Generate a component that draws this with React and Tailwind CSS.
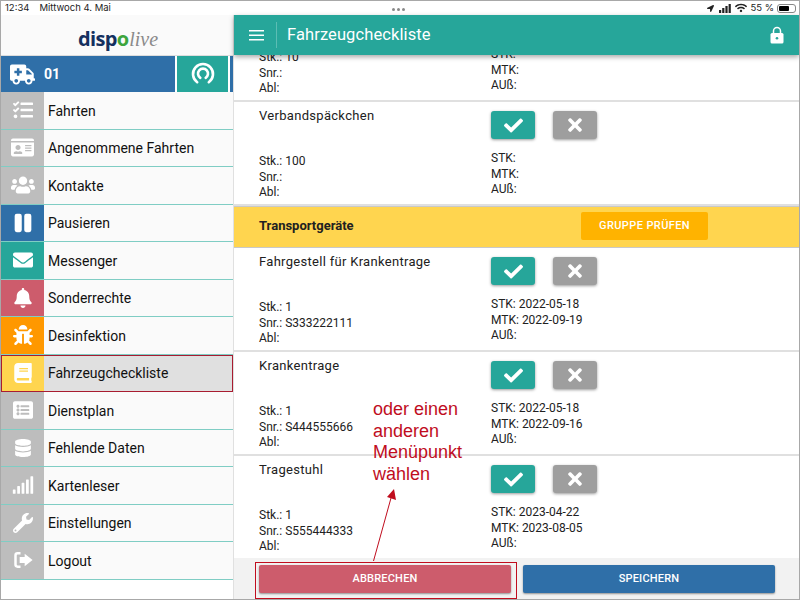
import { FaAmbulance, FaTasks, FaIdCard, FaUsers, FaEnvelope, FaBell, FaBug, FaBook, FaListAlt, FaDatabase, FaSignal, FaWrench, FaCheck, FaTimes, FaLocationArrow, FaWifi } from "react-icons/fa";

function PauseIcon({ className }) {
  return (
    <svg viewBox="0 0 24 24" className={className} fill="white">
      <rect x="2" y="1" width="8.5" height="22" rx="2.5" />
      <rect x="13.5" y="1" width="8.5" height="22" rx="2.5" />
    </svg>
  );
}

function LogoutIcon({ className }) {
  return (
    <svg viewBox="0 0 24 24" className={className} fill="none">
      <path d="M9 4H5.5A2.5 2.5 0 0 0 3 6.5v11A2.5 2.5 0 0 0 5.5 20H9" stroke="white" strokeWidth="3" />
      <path d="M14 4.5 23.5 12 14 19.5V15.5H8v-7h6z" fill="white" />
    </svg>
  );
}

function BroadcastIcon() {
  return (
    <svg width="24" height="24" viewBox="0 0 24 24" fill="none" stroke="white" strokeLinecap="round">
      <path d="M6.2 20.2a10 10 0 1 1 11.6 0" strokeWidth="2.6" />
      <path d="M9.3 15.8a5 5 0 1 1 5.4 0" strokeWidth="2.6" />
    </svg>
  );
}

function LockIcon() {
  return (
    <svg width="14" height="18" viewBox="0 0 14 18" className="ml-auto mr-[15px]">
      <path d="M3.5 8V5a3.5 3.5 0 0 1 7 0v3" fill="none" stroke="white" strokeWidth="1.5" />
      <rect x="0.5" y="7" width="13" height="10.5" rx="1.5" fill="white" />
      <circle cx="7" cy="12.2" r="1.3" fill="#26a69a" />
    </svg>
  );
}

function SignalBars() {
  return (
    <svg width="12" height="9" viewBox="0 0 12 9" fill="#222" className="ml-[3px]">
      <rect x="0" y="6" width="2.2" height="3" />
      <rect x="3.2" y="4" width="2.2" height="5" />
      <rect x="6.4" y="2" width="2.2" height="7" />
      <rect x="9.6" y="0" width="2.2" height="9" />
    </svg>
  );
}

const menu = [
  { label: "Fahrten", Icon: FaTasks, bg: "bg-[#bdbdbd]", size: "w-5 h-5" },
  { label: "Angenommene Fahrten", Icon: FaIdCard, bg: "bg-[#bdbdbd]", size: "w-[23px] h-[23px]" },
  { label: "Kontakte", Icon: FaUsers, bg: "bg-[#bdbdbd]", size: "w-6 h-6" },
  { label: "Pausieren", Icon: PauseIcon, bg: "bg-[#2f6fa8]", size: "w-[20px] h-[20px]" },
  { label: "Messenger", Icon: FaEnvelope, bg: "bg-[#26a69a]", size: "w-[20px] h-[20px]" },
  { label: "Sonderrechte", Icon: FaBell, bg: "bg-[#cd5c6c]", size: "w-5 h-5" },
  { label: "Desinfektion", Icon: FaBug, bg: "bg-[#ff9800]", size: "w-5 h-5" },
  { label: "Fahrzeugcheckliste", Icon: FaBook, bg: "bg-[#ffd54f]", size: "w-5 h-5", active: true },
  { label: "Dienstplan", Icon: FaListAlt, bg: "bg-[#bdbdbd]", size: "w-5 h-5" },
  { label: "Fehlende Daten", Icon: FaDatabase, bg: "bg-[#bdbdbd]", size: "w-[18px] h-[18px]" },
  { label: "Kartenleser", Icon: FaSignal, bg: "bg-[#bdbdbd]", size: "w-[22px] h-[22px]" },
  { label: "Einstellungen", Icon: FaWrench, bg: "bg-[#bdbdbd]", size: "w-5 h-5" },
  { label: "Logout", Icon: LogoutIcon, bg: "bg-[#bdbdbd]", size: "w-5 h-5" },
];

const items = [
  { title: "Verbandspäckchen", stk: "100", snr: "", stkDate: "", mtk: "" },
  { group: "Transportgeräte" },
  { title: "Fahrgestell für Krankentrage", stk: "1", snr: "S333222111", stkDate: "2022-05-18", mtk: "2022-09-19" },
  { title: "Krankentrage", stk: "1", snr: "S444555666", stkDate: "2022-05-18", mtk: "2022-09-16" },
  { title: "Tragestuhl", stk: "1", snr: "S555444333", stkDate: "2023-04-22", mtk: "2023-08-05" },
];

function Details({ left, right }) {
  return (
    <div className="flex leading-[15.6px]">
      <div className="w-[232px] shrink-0">
        {left.map((t) => <div key={t}>{t}</div>)}
      </div>
      <div className="-mt-[3px]">
        {right.map((t) => <div key={t}>{t}</div>)}
      </div>
    </div>
  );
}

function Card({ item }) {
  return (
    <div className="h-[104px] shrink-0 bg-white border-b-2 border-[#e0e0e0] pl-[25px] flex flex-col">
      <div className="flex h-[48px]">
        <div className="w-[232px] shrink-0 pt-[4px] text-[13px] tracking-[0.3px]">{item.title}</div>
        <div className="flex gap-[18px] pt-[9px]">
          <div className="w-[44px] h-[28px] rounded-[3px] bg-[#26a69a] shadow-[0_1px_3px_rgba(0,0,0,0.4)] flex items-center justify-center">
            <FaCheck className="w-[19px] h-[19px] text-white" />
          </div>
          <div className="w-[44px] h-[28px] rounded-[3px] bg-[#9e9e9e] shadow-[0_1px_3px_rgba(0,0,0,0.4)] flex items-center justify-center">
            <FaTimes className="w-[20px] h-[20px] text-white" />
          </div>
        </div>
      </div>
      <div className="mt-[4px]">
        <Details
          left={[`Stk.: ${item.stk}`, `Snr.: ${item.snr}`, "Abl:"]}
          right={[`STK: ${item.stkDate}`, `MTK: ${item.mtk}`, "AUß:"]}
        />
      </div>
    </div>
  );
}

export default function App() {
  return (
    <div className="relative w-[800px] h-[600px] border border-[#a8a8a8] bg-white overflow-hidden text-[#212121] text-[12px] font-['Roboto',sans-serif] flex flex-col">
      {/* ipad status bar */}
      <div className="h-[14px] shrink-0 flex items-center justify-between pl-[4px] pr-[3px] text-[9.5px] font-['Inter',sans-serif] text-[#222] bg-white">
        <div className="flex gap-[10px]">
          <span>12:34</span>
          <span>Mittwoch 4. Mai</span>
        </div>
        <div className="flex items-center gap-[2px]">
          <FaLocationArrow className="w-[7px] h-[7px]" />
          <SignalBars />
          <FaWifi className="w-[12px] h-[10px] ml-[2px]" />
          <span className="ml-[1px]">55 %</span>
          <div className="w-[19px] h-[9px] border border-[#888] rounded-[3px] p-[1px] ml-[1px]">
            <div className="w-[10px] h-full bg-black rounded-[1px]" />
          </div>
        </div>
      </div>
      <div className="absolute left-[391px] top-[7px] flex gap-[2px]">
        <span className="w-[3px] h-[3px] rounded-full bg-[#888]" />
        <span className="w-[3px] h-[3px] rounded-full bg-[#888]" />
        <span className="w-[3px] h-[3px] rounded-full bg-[#888]" />
      </div>

      <div className="flex flex-1 min-h-0">
        {/* sidebar */}
        <div className="w-[232px] shrink-0 flex flex-col bg-white">
          <div className="h-[40px] shrink-0 bg-[#fafafa] flex items-center justify-center pl-[2px] pt-[8px] leading-none">
            <span className="font-['Open_Sans',sans-serif] font-bold text-[#14305f] text-[20px] tracking-[-0.6px]">disp</span>
            <span className="font-['Open_Sans',sans-serif] font-bold text-[#3da53d] text-[20px]">o</span>
            <span className="font-['Liberation_Serif',serif] italic text-[#8a8a8a] text-[20px]">live</span>
          </div>
          <div className="h-[37px] shrink-0 flex gap-[2px] border-t border-[#ddd]">
            <div className="w-[174px] bg-[#2f6fa8] flex items-center text-white">
              <FaAmbulance className="w-[25px] h-[25px] ml-[9px]" />
              <span className="ml-[9px] text-[14px] font-bold">01</span>
            </div>
            <div className="w-[51px] bg-[#26a69a] flex items-center justify-center">
              <BroadcastIcon />
            </div>
            <div className="flex-1 bg-[#2f6fa8]" />
          </div>
          <div className="flex flex-col">
            {menu.map(({ label, Icon, bg, size, active }) => (
              <div
                key={label}
                className={`h-[37.5px] shrink-0 flex box-border border-b border-[#7fcdc4] ${active ? "bg-[#e0e0e0] outline outline-1 -outline-offset-1 outline-[#a81c30]" : "bg-[#fafafa]"}`}
              >
                <div className={`w-[43px] shrink-0 flex items-center justify-center ${bg}`}>
                  <Icon className={`${size} text-white`} />
                </div>
                <span className="pl-[4px] pt-[2px] self-center text-[14px] text-[#111]">{label}</span>
              </div>
            ))}
          </div>
        </div>

        {/* main */}
        <div className="flex-1 min-w-0 flex flex-col bg-white border-l border-[#e0e0e0]">
          <div className="h-[40px] shrink-0 bg-[#26a69a] relative z-10 shadow-[0_2px_5px_rgba(0,0,0,0.35)] flex items-center text-white">
            <svg width="15" height="11" viewBox="0 0 15 11" className="ml-[15px]" fill="white">
              <rect y="0" width="15" height="1.5" />
              <rect y="4.5" width="15" height="1.5" />
              <rect y="9" width="15" height="1.5" />
            </svg>
            <div className="w-px h-[26px] bg-[#5cbdb4] ml-[12px]" />
            <span className="ml-[10px] text-[16.5px] tracking-[0.1px]">Fahrzeugcheckliste</span>
            <LockIcon />
          </div>

          <div className="flex-1 min-h-0 flex flex-col overflow-hidden">
            {/* first card is scrolled away under the header */}
            <div className="h-[47px] shrink-0 overflow-hidden flex flex-col justify-end pl-[25px] pb-[3px] border-b-2 border-[#e0e0e0]">
              <Details left={["Stk.: 10", "Snr.:", "Abl:"]} right={["STK:", "MTK:", "AUß:"]} />
            </div>
            {items.map((item) =>
              item.group ? (
                <div key={item.group} className="h-[42px] shrink-0 bg-[#ffd54f] border-y border-[#c9c9c9] flex items-center pl-[25px] pb-[2px]">
                  <span className="w-[322px] shrink-0 text-[13px] font-bold text-[#212121]">{item.group}</span>
                  <div className="w-[127px] h-[28px] bg-[#ffb300] rounded-[2px] flex items-center justify-center text-white text-[11px] tracking-[0.4px] font-medium">
                    GRUPPE PRÜFEN
                  </div>
                </div>
              ) : (
                <Card key={item.title} item={item} />
              )
            )}
          </div>

          <div className="h-[41px] shrink-0 bg-[#f2f2f2] flex gap-[12px] pl-[25px] pt-[7px]">
            <div className="w-[252px] h-[28px] pt-[1px] rounded-[2px] bg-[#cd5c6c] shadow-[0_1px_2px_rgba(0,0,0,0.4)] flex items-center justify-center text-white text-[11px] font-medium tracking-[0.2px]">
              ABBRECHEN
            </div>
            <div className="w-[252px] h-[28px] pt-[1px] rounded-[2px] bg-[#2f6fa8] shadow-[0_1px_2px_rgba(0,0,0,0.4)] flex items-center justify-center text-white text-[11px] font-medium tracking-[0.2px]">
              SPEICHERN
            </div>
          </div>
        </div>
      </div>

      {/* annotation on top of the screenshot */}
      <div className="absolute left-[372px] top-[398px] text-[18px] leading-[21.5px] text-[#c00d1e] font-['Liberation_Sans',sans-serif]">
        oder einen<br />anderen<br />Menüpunkt<br />wählen
      </div>
      <svg className="absolute left-[364px] top-[483px]" width="40" height="80" viewBox="0 0 40 80">
        <line x1="8.5" y1="77" x2="26" y2="14" stroke="#c00d1e" strokeWidth="1" />
        <polygon points="29,5 31,16 22,13" fill="#c00d1e" />
      </svg>
      <div className="absolute left-[254px] top-[561px] w-[262px] h-[37px] border border-[#c00d1e]" />
    </div>
  );
}
